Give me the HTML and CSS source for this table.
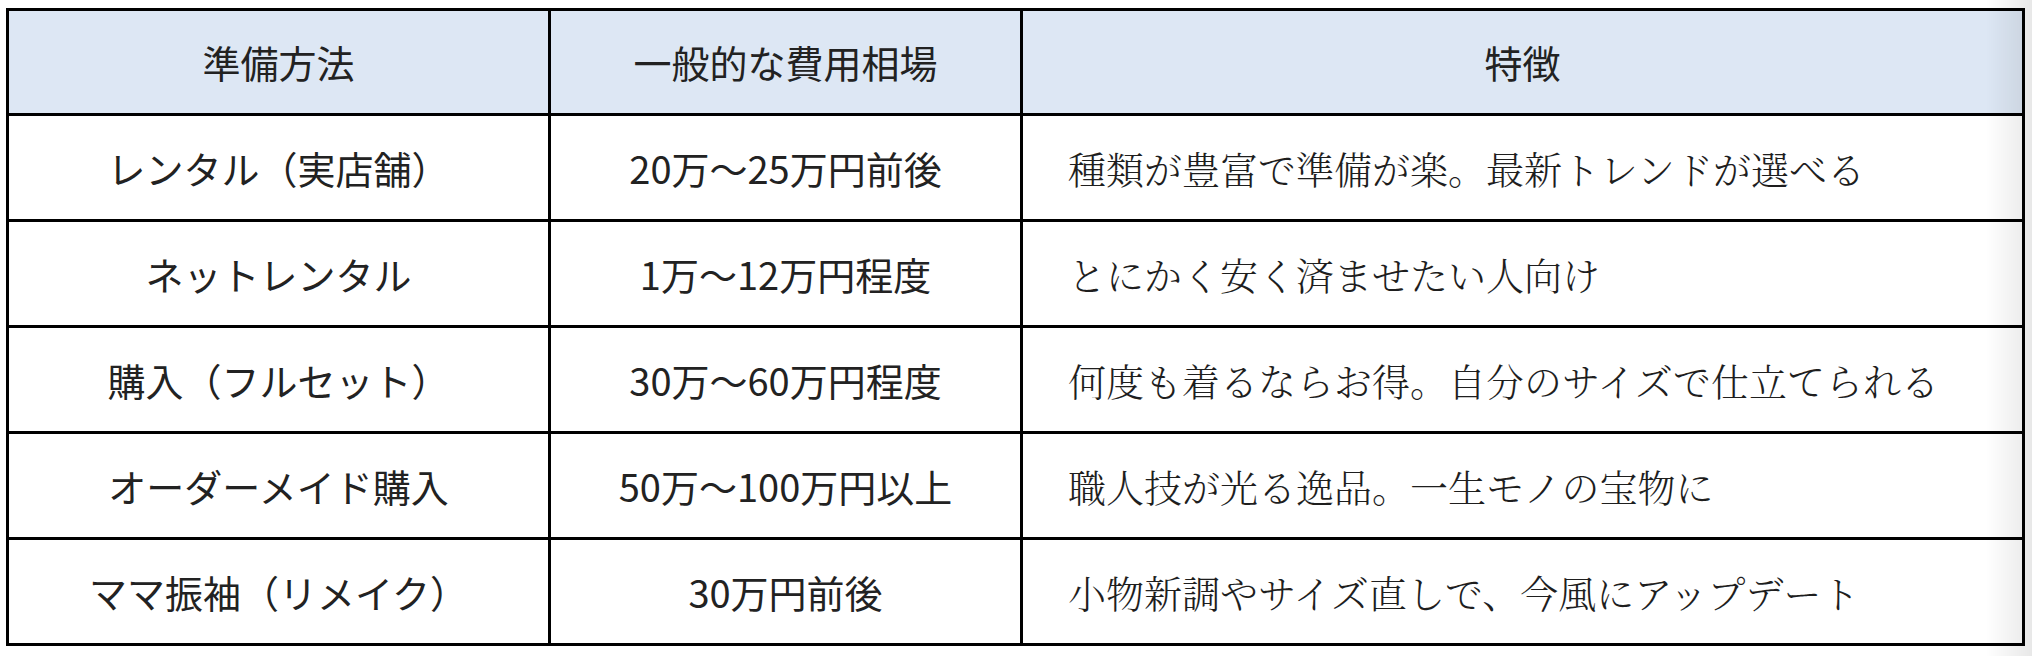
FILE: index.html
```html
<!DOCTYPE html>
<html lang="ja">
<head>
<meta charset="utf-8">
<title>振袖の準備方法</title>
<link rel="stylesheet" href="styles.css">
</head>
<body>
<div class="page">
  <table class="cost-table">
    <colgroup>
      <col class="c-method">
      <col class="c-cost">
      <col class="c-note">
    </colgroup>
    <thead>
      <tr>
        <th>準備方法</th>
        <th>一般的な費用相場</th>
        <th>特徴</th>
      </tr>
    </thead>
    <tbody>
      <tr>
        <td class="method">レンタル（実店舗）</td>
        <td class="cost">20万〜25万円前後</td>
        <td class="note">種類が豊富で準備が楽。最新トレンドが選べる</td>
      </tr>
      <tr>
        <td class="method">ネットレンタル</td>
        <td class="cost">1万〜12万円程度</td>
        <td class="note">とにかく安く済ませたい人向け</td>
      </tr>
      <tr>
        <td class="method">購入（フルセット）</td>
        <td class="cost">30万〜60万円程度</td>
        <td class="note">何度も着るならお得。自分のサイズで仕立てられる</td>
      </tr>
      <tr>
        <td class="method">オーダーメイド購入</td>
        <td class="cost">50万〜100万円以上</td>
        <td class="note">職人技が光る逸品。一生モノの宝物に</td>
      </tr>
      <tr>
        <td class="method">ママ振袖（リメイク）</td>
        <td class="cost">30万円前後</td>
        <td class="note">小物新調やサイズ直しで、今風にアップデート</td>
      </tr>
    </tbody>
  </table>
  <div class="edge-shade"></div>
</div>
</body>
</html>
```
FILE: styles.css
```css
html, body {
  margin: 0;
  padding: 0;
  background: #ffffff;
}

.page {
  padding: 8px 0 0 6px;
}

.cost-table {
  border-collapse: collapse;
  width: 2016px;
  table-layout: fixed;
  font-family: "Noto Sans CJK JP", "Noto Sans", sans-serif;
  color: #222222;
  font-size: 38px;
}

.c-method { width: 542px; }
.c-cost { width: 472px; }
.c-note { width: 1002px; }

.cost-table th,
.cost-table td {
  border: 3px solid #000000;
  padding: 0;
  vertical-align: middle;
  line-height: 1.2;
}

.cost-table thead tr {
  height: 105px;
}

.cost-table th {
  background: #dde7f4;
  font-weight: 400;
  text-align: center;
}

.cost-table tbody tr {
  height: 106px;
}

.method,
.cost {
  text-align: center;
}

.cost-table td.note {
  text-align: left;
  padding-left: 45px;
  font-family: "Noto Serif CJK JP", "Noto Serif JP", "IPAMincho", "Noto Sans CJK JP", serif;
  font-weight: 300;
  color: #1e1e1e;
}

.edge-shade {
  position: fixed;
  top: 0;
  right: 0;
  width: 46px;
  height: 100%;
  background: linear-gradient(to right, rgba(0, 0, 0, 0), rgba(0, 0, 0, 0.09));
  pointer-events: none;
}
```
